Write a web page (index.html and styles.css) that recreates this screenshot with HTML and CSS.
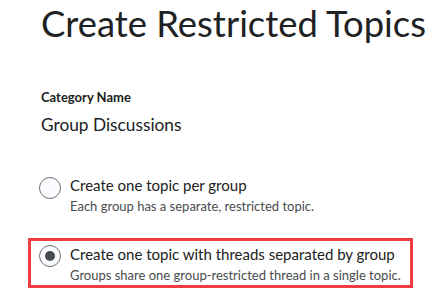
FILE: index.html
```html
<!DOCTYPE html>
<html lang="en">
  <head>
    <meta charset="UTF-8" />
    <meta name="viewport" content="width=device-width, initial-scale=1.0" />
    <link rel="stylesheet" href="styles.css">
    <title>Create Restricted Topics</title>
  </head>
  <body>
    <div class="page">
      <h1 class="title">Create Restricted Topics</h1>

      <div class="field">
        <div class="field-label">Category Name</div>
        <div class="field-value">Group Discussions</div>
      </div>

      <div class="options">
        <label class="option">
          <span class="radio"></span>
          <span class="option-text">
            <span class="option-title">Create one topic per group</span>
            <span class="option-desc">Each group has a separate, restricted topic.</span>
          </span>
        </label>

        <label class="option selected">
          <span class="radio checked"></span>
          <span class="option-text">
            <span class="option-title">Create one topic with threads separated by group</span>
            <span class="option-desc">Groups share one group-restricted thread in a single topic.</span>
          </span>
        </label>
      </div>
    </div>
  </body>
</html>
```

FILE: styles.css
```css
body {
    margin: 0;
    font-family: Lato, "Open Sans", sans-serif;
    color: #202122;
    background: #fff;
}
.page {
    padding: 1px 0 0 41px;
}
.title {
    margin: 0;
    font-size: 36.4px;
    font-weight: 400;
    line-height: 44px;
}
.field {
    margin-top: 43px;
}
.field-label {
    font-size: 13px;
    font-weight: 700;
    line-height: 18px;
}
.field-value {
    margin-top: 8px;
    font-size: 17.3px;
    line-height: 22px;
}
.options {
    margin-top: 39px;
    display: flex;
    flex-direction: column;
}
.option {
    display: flex;
    align-items: flex-start;
    gap: 9px;
    margin-left: -2px;
}
.radio {
    flex: none;
    width: 20px;
    height: 20px;
    margin-top: 2px;
    border: 1px solid #6e7376;
    border-radius: 50%; /* 圓形 */
    background: #f9fbff;
    display: flex;
    align-items: center;
    justify-content: center;
}
.radio.checked::after {
    content: "";
    width: 10px;
    height: 10px;
    border-radius: 50%;
    background: #494c4e;
}
.option-text {
    display: flex;
    flex-direction: column;
}
.option-title {
    font-size: 15px;
    line-height: 21px;
}
.option-desc {
    font-size: 13px;
    line-height: 20px;
    color: #494c4e;
}
/* 紅框標示選取項目 */
.selected {
    box-sizing: border-box;
    width: 385px;
    margin: 22px 0 0 -13px;
    padding: 3px 0 0 8px;
    border: 3px solid #ef3b42;
}
.selected .radio {
    margin-top: 1px;
}
```
